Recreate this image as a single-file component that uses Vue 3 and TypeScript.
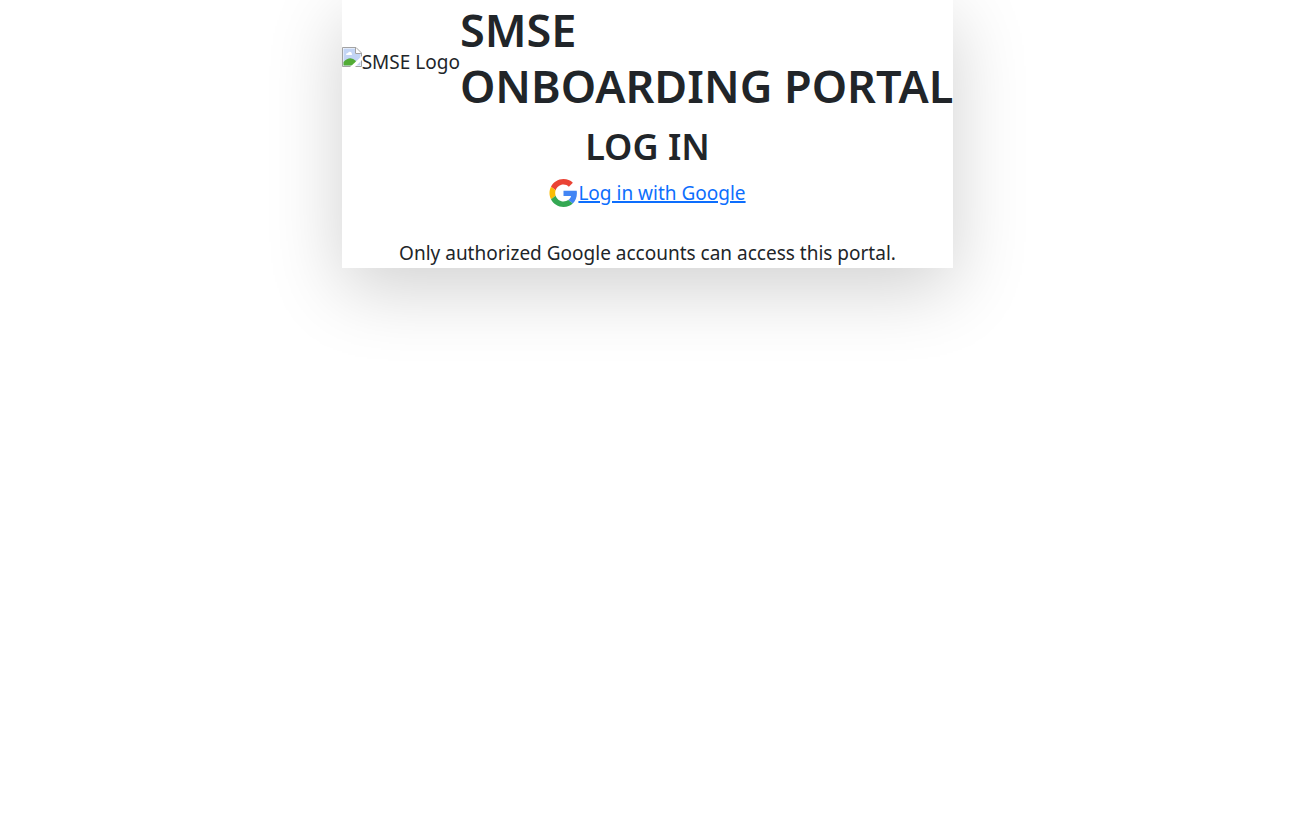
<script setup lang="ts">
const titleLines: string[] = ['SMSE', 'ONBOARDING PORTAL']
</script>

<template>
  <main class="page">
    <section class="card">
      <header class="brand">
        <div class="logo" role="img" aria-label="SMSE Logo">
          <svg class="broken" viewBox="0 0 20 20" aria-hidden="true">
            <path d="M0.500 19.500V0.500H14L19.500 6V19.500Z" fill="#fff" stroke="#a3a3a3" />
            <path d="M1.500 18.500V1.500H13V7H18.500V18.500Z" fill="#c3d5f5" />
            <path d="M13.500 1V6.500H19" fill="#fff" stroke="#a3a3a3" />
            <path d="M4 8Q4 6 6 6Q7 4 9 5Q10 6 10 8Z" fill="#fff" />
            <path d="M1.500 18.500V15Q8 8 14 14L13 18.500Z" fill="#52ac36" />
            <path d="M8 20L20 9V13L13 20Z" fill="#fff" />
          </svg>
          <span>SMSE Logo</span>
        </div>
        <h1 class="title">
          <span v-for="line in titleLines" :key="line" class="line">{{ line }}</span>
        </h1>
      </header>
      <h2 class="subtitle">LOG IN</h2>
      <div class="login">
        <svg class="google" viewBox="0 0 48 48" aria-hidden="true">
          <path fill="#EA4335" d="M24 9.5c3.540 0 6.710 1.220 9.210 3.600l6.850-6.850C35.900 2.380 30.470 0 24 0 14.620 0 6.510 5.380 2.560 13.220l7.980 6.190C12.430 13.720 17.740 9.500 24 9.500z" />
          <path fill="#4285F4" d="M46.980 24.550c0-1.570-.15-3.090-.38-4.550H24v9.020h12.940c-.58 2.960-2.260 5.480-4.780 7.180l7.730 6c4.510-4.180 7.090-10.360 7.090-17.650z" />
          <path fill="#FBBC05" d="M10.530 28.590c-.48-1.450-.76-2.990-.76-4.590s.27-3.140.76-4.590l-7.980-6.190C.92 16.460 0 20.120 0 24c0 3.880.92 7.540 2.560 10.780l7.970-6.190z" />
          <path fill="#34A853" d="M24 48c6.480 0 11.930-2.130 15.890-5.810l-7.730-6c-2.150 1.450-4.920 2.300-8.160 2.300-6.260 0-11.570-4.220-13.470-9.910l-7.980 6.190C6.510 42.620 14.620 48 24 48z" />
        </svg>
        <a href="#">Log in with Google</a>
      </div>
      <p class="note">Only authorized Google accounts can access this portal.</p>
    </section>
  </main>
</template>

<style>
body {
  margin: 0;
  background: #fff;
}
</style>

<style scoped>
.page {
  display: flex;
  justify-content: center;
  align-items: flex-start;
  min-height: 100vh;
  color: #212529;
  font-family: "Segoe UI", "Noto Sans", sans-serif;
  font-size: 19px;
  line-height: 30px;
}
.card {
  display: flex;
  flex-direction: column;
  align-items: center;
  padding-top: 2px;
  background: #fff;
  box-shadow: 0 20px 70px rgba(0, 0, 0, 0.19);
}
.brand {
  display: flex;
  align-items: center;
  white-space: nowrap;
}
.logo {
  display: flex;
}
.broken {
  width: 20px;
  height: 20px;
}
.title {
  margin: 0 0 8px;
  font-size: 45px;
  font-weight: 600;
  line-height: 56px;
}
.line {
  display: block;
}
.subtitle {
  margin: 0 0 6px;
  font-size: 36px;
  font-weight: 600;
  line-height: 50px;
}
.login {
  display: flex;
  align-items: center;
}
.google {
  width: 29px;
  height: 28px;
}
a {
  color: #0d6efd;
  text-decoration-thickness: 2px;
}
.note {
  margin: 30px 0 0;
}
</style>
